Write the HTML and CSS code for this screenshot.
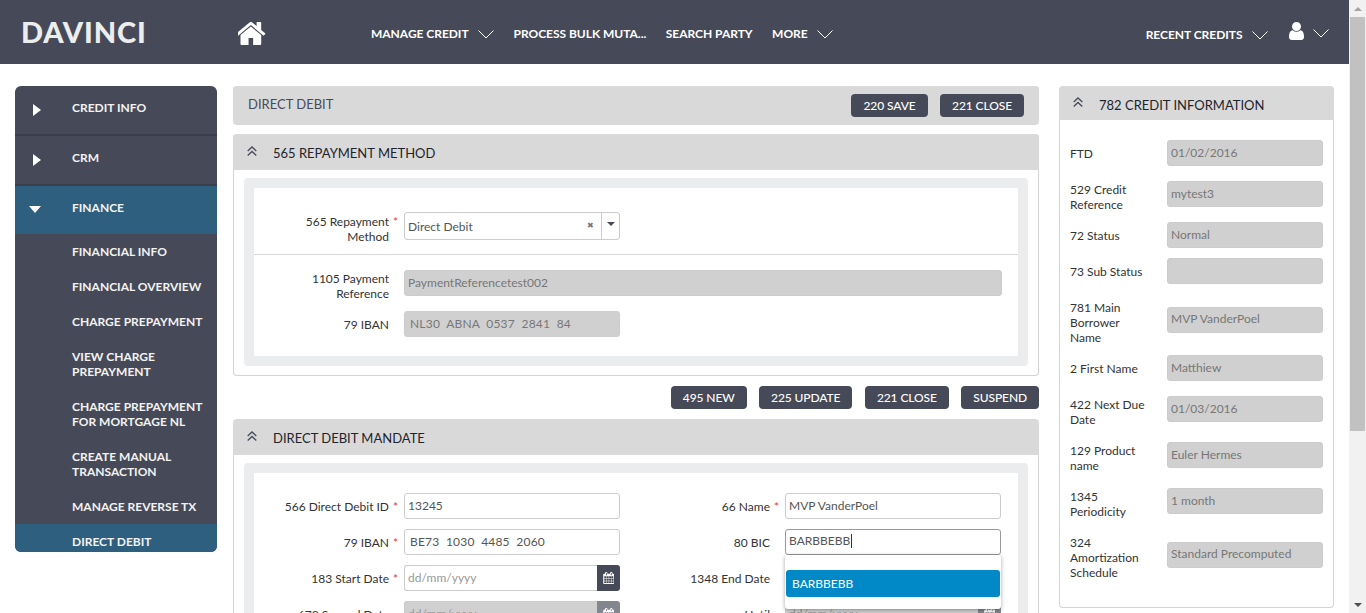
FILE: index.html
```html
<!DOCTYPE html>
<html lang="en">
<head>
<meta charset="utf-8">
<title>Davinci - Direct Debit</title>
<link rel="stylesheet" href="styles.css">
</head>
<body>
<svg class="defs" aria-hidden="true">
  <symbol id="chev" viewBox="0 0 16 9"><polyline points="0.5,0.5 8,8 15.5,0.5" fill="none" stroke="#fff" stroke-width="1"/></symbol>
  <symbol id="dbl" viewBox="0 0 10 10"><path d="M0.7 5 5 1 9.3 5M0.7 9.500 5 5.500 9.300 9.500" fill="none" stroke="#474b59" stroke-width="1.3"/></symbol>
  <symbol id="cal" viewBox="0 0 1664 1792"><path fill="#fff" d="M192 1664h288v-288h-288v288zm352 0h320v-288h-320v288zm-352-352h288v-320h-288v320zm352 0h320v-320h-320v320zm-352-384h288v-288h-288v288zm736 736h320v-288h-320v288zm-384-736h320v-288h-320v288zm768 736h288v-288h-288v288zm-384-352h320v-320h-320v320zm-352-864v-288q0-13-9.500-22.500t-22.500-9.500h-64q-13 0-22.500 9.500t-9.500 22.500v288q0 13 9.500 22.500t22.500 9.500h64q13 0 22.500-9.500t9.500-22.500zm736 864h288v-320h-288v320zm-384-384h320v-288h-320v288zm352 0h288v-288h-288v288zm32-480v-288q0-13-9.500-22.500t-22.500-9.500h-64q-13 0-22.500 9.500t-9.500 22.500v288q0 13 9.500 22.500t22.500 9.500h64q13 0 22.500-9.500t9.500-22.500zm384-64v1280q0 52-38 90t-90 38h-1408q-52 0-90-38t-38-90v-1280q0-52 38-90t90-38h128v-96q0-66 47-113t113-47h64q66 0 113 47t47 113v96h384v-96q0-66 47-113t113-47h64q66 0 113 47t47 113v96h128q52 0 90 38t38 90z"/></symbol>
</svg>
<div class="page">
  <header class="topbar">
    <div class="logo">DAVINCI</div>
    <svg class="home" viewBox="128 256 1536 1280" aria-label="Home"><path fill="#fff" d="M1408 992v480q0 26-19 45t-45 19h-384v-384h-256v384h-384q-26 0-45-19t-19-45v-480q0-1 .5-3t.5-3l575-474 575 474q1 2 1 6zm223-69l-62 74q-8 9-21 11h-3q-13 0-21-7l-692-577-692 577q-12 8-24 7-13-2-21-11l-62-74q-8-10-7-23.500t11-21.500l719-599q32-26 76-26t76 26l244 204v-195q0-14 9-23t23-9h192q14 0 23 9t9 23v408l219 182q10 8 11 21.500t-7 23.500z"/></svg>
    <nav class="mainnav">
      <span class="navitem">MANAGE CREDIT <svg class="chev"><use href="#chev"/></svg></span>
      <span class="navitem">PROCESS BULK MUTA...</span>
      <span class="navitem">SEARCH PARTY</span>
      <span class="navitem">MORE <svg class="chev"><use href="#chev"/></svg></span>
    </nav>
    <div class="usernav">
      <span class="navitem recent">RECENT CREDITS <svg class="chev"><use href="#chev"/></svg></span>
      <svg class="user" viewBox="256 128 1280 1536" aria-label="User"><path fill="#fff" d="M1536 1399q0 109-62.500 187t-150.500 78h-854q-88 0-150.500-78t-62.500-187q0-85 8.500-160.500t31.500-152 58.500-131 94-89 134.500-34.500q131 128 313 128t313-128q76 0 134.500 34.500t94 89 58.500 131 31.500 152 8.500 160.500zm-256-887q0 159-112.500 271.500t-271.500 112.500-271.500-112.500-112.500-271.500 112.500-271.500 271.500-112.500 271.500 112.500 112.500 271.500z"/></svg>
      <svg class="chev"><use href="#chev"/></svg>
    </div>
  </header>

  <div class="content">
    <aside class="sidebar">
      <div class="sideitem"><span class="tri-right"></span>CREDIT INFO</div>
      <div class="sideitem"><span class="tri-right"></span>CRM</div>
      <div class="sideitem open"><span class="tri-down"></span>FINANCE</div>
      <ul class="submenu">
        <li>FINANCIAL INFO</li>
        <li>FINANCIAL OVERVIEW</li>
        <li>CHARGE PREPAYMENT</li>
        <li>VIEW CHARGE PREPAYMENT</li>
        <li>CHARGE PREPAYMENT FOR MORTGAGE NL</li>
        <li>CREATE MANUAL TRANSACTION</li>
        <li>MANAGE REVERSE TX</li>
        <li class="active">DIRECT DEBIT</li>
      </ul>
    </aside>

    <main class="center">
      <div class="toolbar">
        <h1 class="pagetitle">DIRECT DEBIT</h1>
        <div class="btns">
          <button class="btn">220 SAVE</button>
          <button class="btn">221 CLOSE</button>
        </div>
      </div>

      <section class="panel">
        <div class="panelhead"><svg class="dbl"><use href="#dbl"/></svg><h2>565 REPAYMENT METHOD</h2></div>
        <div class="panelbody">
          <div class="well">
            <div class="form first">
              <label class="lbl">565 Repayment Method<span class="req">*</span></label>
              <div class="select">
                <span class="selval">Direct Debit</span>
                <span class="selx">&#10006;</span>
                <span class="selarrow"><span class="tri-small"></span></span>
              </div>
            </div>
            <hr class="divider">
            <div class="form">
              <label class="lbl">1105 Payment Reference</label>
              <input class="field span3" disabled value="PaymentReferencetest002">
              <label class="lbl single">79 IBAN</label>
              <input class="field iban" disabled value="NL30  ABNA  0537  2841  84">
            </div>
          </div>
        </div>
      </section>

      <div class="actions">
        <button class="btn">495 NEW</button>
        <button class="btn">225 UPDATE</button>
        <button class="btn">221 CLOSE</button>
        <button class="btn">SUSPEND</button>
      </div>

      <section class="panel">
        <div class="panelhead"><svg class="dbl"><use href="#dbl"/></svg><h2>DIRECT DEBIT MANDATE</h2></div>
        <div class="panelbody">
          <div class="well">
            <div class="form mandate">
              <label class="lbl single">566 Direct Debit ID<span class="req">*</span></label>
              <input class="field" value="13245">
              <label class="lbl single">66 Name<span class="req">*</span></label>
              <input class="field" value="MVP VanderPoel">

              <label class="lbl single">79 IBAN<span class="req">*</span></label>
              <input class="field iban" value="BE73  1030  4485  2060">
              <label class="lbl single">80 BIC</label>
              <div class="bic">
                <div class="field focus">BARBBEBB<span class="caret"></span></div>
                <div class="suggest"><div class="suggestitem">BARBBEBB</div></div>
              </div>

              <label class="lbl single">183 Start Date<span class="req">*</span></label>
              <div class="date"><input class="field" placeholder="dd/mm/yyyy"><span class="addon"><svg class="cal"><use href="#cal"/></svg></span></div>
              <label class="lbl single">1348 End Date</label>
              <div class="date"><input class="field" placeholder="dd/mm/yyyy"><span class="addon"><svg class="cal"><use href="#cal"/></svg></span></div>

              <label class="lbl single">678 Second Date</label>
              <div class="date off"><input class="field" disabled placeholder="dd/mm/yyyy"><span class="addon"><svg class="cal"><use href="#cal"/></svg></span></div>
              <label class="lbl single">Until</label>
              <div class="date off"><input class="field" disabled placeholder="dd/mm/yyyy"><span class="addon"><svg class="cal"><use href="#cal"/></svg></span></div>
            </div>
          </div>
        </div>
      </section>
    </main>

    <aside class="info">
      <div class="panelhead infohead"><svg class="dbl"><use href="#dbl"/></svg><h2>782 CREDIT INFORMATION</h2></div>
      <div class="infobody">
        <div class="inforow"><label>FTD</label><input class="field" disabled value="01/02/2016"></div>
        <div class="inforow"><label>529 Credit Reference</label><input class="field" disabled value="mytest3"></div>
        <div class="inforow"><label>72 Status</label><input class="field" disabled value="Normal"></div>
        <div class="inforow"><label>73 Sub Status</label><input class="field" disabled></div>
        <div class="inforow"><label>781 Main Borrower Name</label><input class="field" disabled value="MVP VanderPoel"></div>
        <div class="inforow"><label>2 First Name</label><input class="field" disabled value="Matthiew"></div>
        <div class="inforow"><label>422 Next Due Date</label><input class="field" disabled value="01/03/2016"></div>
        <div class="inforow"><label>129 Product name</label><input class="field" disabled value="Euler Hermes"></div>
        <div class="inforow"><label>1345 Periodicity</label><input class="field" disabled value="1 month"></div>
        <div class="inforow"><label>324 Amortization Schedule</label><input class="field" disabled value="Standard Precomputed"></div>
      </div>
    </aside>
  </div>
</div>
<div class="scrollbar">
  <span class="sb-up"></span>
  <span class="sb-thumb"></span>
  <span class="sb-down"></span>
</div>
</body>
</html>
```
FILE: styles.css
```css
* { box-sizing: border-box; }
html, body { margin: 0; height: 100%; overflow: hidden; }
body {
  display: flex;
  font-family: Lato, "Open Sans", sans-serif;
  font-size: 12px;
  line-height: 15px;
  color: #333;
  background: #fff;
}
.defs { display: none; }
.page { flex: 1; min-width: 0; height: 613px; overflow: hidden; }

/* top bar */
.topbar {
  height: 64px;
  background: #464a58;
  display: flex;
  align-items: center;
  padding-left: 21px;
  padding-right: 20px;
  color: #fff;
}
.logo {
  width: 217px;
  font-size: 29px;
  font-weight: 900;
  line-height: 30px;
  letter-spacing: 0.9px;
  color: #eceded;
  margin-top: 0;
}
.home { width: 28px; height: 23px; margin-top: 2px; flex: none; }
.mainnav {
  display: flex;
  align-items: center;
  gap: 19.5px;
  margin-left: 105px;
  margin-top: 3px;
}
.navitem { font-weight: 700; font-size: 12px; white-space: nowrap; display: flex; align-items: center; letter-spacing: -0.03px; }
.chev { width: 16px; height: 9px; margin-left: 9.5px; flex: none; margin-top: 2px; }
.usernav { margin-left: auto; display: flex; align-items: center; margin-top: 4px; }
.recent { margin-right: 21px; }
.user { width: 15px; height: 18px; margin-top: -6px; flex: none; }
.usernav > .chev { margin-left: 9px; margin-top: -2px; }

/* columns */
.content {
  display: grid;
  grid-template-columns: 202px 810px 275px;
  column-gap: 16px;
  padding: 22px 0 0 15px;
  align-items: start;
}
.center { padding-right: 4px; }

/* sidebar */
.sidebar {
  height: 466px;
  overflow: hidden;
  background: #464a58;
  border-radius: 6px;
  color: #f2f2f2;
  font-weight: 700;
}
.sideitem {
  height: 50px;
  display: flex;
  align-items: center;
  padding-left: 57px;
  padding-bottom: 5px;
  border-bottom: 2px solid #3a3e4b;
  position: relative;
}
.sideitem.open { background: #2e5f7f; border-bottom: 0; height: 48px; padding-bottom: 6px; }
.tri-right {
  position: absolute; left: 18px; top: 18px;
  border-left: 8px solid #fff;
  border-top: 6px solid transparent;
  border-bottom: 6px solid transparent;
}
.tri-down {
  position: absolute; left: 14px; top: 20px;
  border-top: 7px solid #fff;
  border-left: 6.5px solid transparent;
  border-right: 6.5px solid transparent;
}
.submenu { list-style: none; margin: 0; padding: 0; }
.submenu li { padding: 10px 10px 10px 57px; }
.submenu .active { background: #2e5f7f; }

/* center */
.toolbar {
  height: 39px;
  background: #d9d9d9;
  border-radius: 4px;
  display: flex;
  align-items: center;
  justify-content: space-between;
  padding: 0 15px;
  margin-bottom: 9px;
}
.pagetitle { margin: 0 0 2px; font-size: 13px; font-weight: 400; color: #474b59; }
.btns { display: flex; gap: 12.5px; }
.btn {
  height: 23px;
  padding: 0 12px;
  border: 0;
  border-radius: 4px;
  background: #464a58;
  color: #fff;
  font: 500 12px/15px Lato, sans-serif;
  letter-spacing: -0.1px;
  white-space: nowrap;
}
.panelhead {
  height: 36px;
  background: #d9d9d9;
  border-radius: 4px 4px 0 0;
  display: flex;
  align-items: center;
  padding-left: 14px;
  padding-top: 2px;
}
.panelhead h2 { margin: 0; font-size: 13px; line-height: 18px; font-weight: 400; color: #22242c; }
.dbl { width: 10px; height: 10px; margin-right: 16px; flex: none; margin-top: -5px; }
.panelbody {
  border: 1px solid #d4d4d4;
  border-top: 0;
  border-radius: 0 0 4px 4px;
  padding: 8px 10px 9px 10px;
}
.well { background: #ebecee; border-radius: 4px; padding: 10px; display: flex; flex-direction: column; }
.form {
  background: #fff;
  display: grid;
  grid-template-columns: 135px 216px 135px 216px;
  column-gap: 15px;
  row-gap: 10px;
  padding: 20px 0 19px;
  align-items: center;
}
.form.first { padding: 20px 0 10px; }
.divider { margin: 0; border: 0; height: 1px; background: #d9d9d9; flex: none; }
.form.first + .divider + .form { padding-top: 10px; }
.lbl {
  position: relative;
  text-align: right;
  padding: 6px 0 0 15px;
  color: #333;
  display: block;
  align-self: start;
  grid-column: 1;
}
.form .lbl:nth-of-type(even) { grid-column: auto; }
.mandate { padding-bottom: 40px; }
.req {
  position: absolute;
  top: 6px;
  right: -9px;
  color: #f33;
}
.lbl.single { height: 26px; padding-left: 0; }
.field {
  display: block;
  width: 100%;
  height: 26px;
  border: 1px solid #ccc;
  border-radius: 3px;
  padding: 0 3px 2px;
  background: #fff;
  color: #555;
  font: 400 12px/21px Lato, sans-serif;
  outline: none;
}
.field:disabled { background: #d0d0d0; color: #777; }
.field::placeholder { color: #999; opacity: 1; }
.span3 { grid-column: 2 / span 3; width: calc(100% + 1px); }
.iban { padding-left: 5px; letter-spacing: 0.2px; grid-column: 2; }
.mandate .iban { grid-column: auto; }
.select {
  height: 28px;
  border: 1px solid #ccc;
  border-radius: 3px;
  display: flex;
  align-items: center;
  color: #555;
}
.selval { flex: 1; padding: 1px 0 0 3px; }
.selx { font-size: 8px; color: #777; margin: -2px 7px 0 0; }
.selarrow {
  width: 18px; height: 100%;
  border-left: 1px solid #ccc;
  display: flex; justify-content: center; padding-top: 9px;
}
.tri-small {
  width: 0; height: 0;
  border-top: 4px solid #474b59;
  border-left: 4px solid transparent;
  border-right: 4px solid transparent;
}
.actions { display: flex; justify-content: flex-end; gap: 12.5px; margin: 10px 0; }
.bic { position: relative; }
.focus { border-color: #999; color: #555; }
.caret { display: inline-block; width: 1px; height: 14px; background: #333; vertical-align: -3px; margin-left: 1px; }
.suggest {
  position: absolute;
  top: 26px; left: 0; right: 0;
  height: 54px;
  padding: 15px 1px 0;
  background: #fff;
  border-radius: 3px;
  box-shadow: 0 1px 4px rgba(0,0,0,.35);
  z-index: 2;
}
.suggestitem {
  height: 27px;
  background: #0088c7;
  border-radius: 3px;
  color: #fff;
  padding: 6px 6px;
}
.date { display: flex; position: relative; }
.date .field { border-radius: 3px 0 0 3px; border-right: 0; flex: 1; min-width: 0; }
.addon {
  width: 23px; height: 26px; flex: none;
  background: #464a58;
  border-radius: 0 3px 3px 0;
  display: flex; align-items: center; justify-content: center;
}
.cal { width: 11px; height: 12px; }
.off .addon { background: #84868f; }

/* credit info */
.infohead { height: 34px; padding-top: 3px; }
.infobody {
  border: 1px solid #d4d4d4;
  border-top: 0;
  border-radius: 0 0 4px 4px;
  padding: 20px 10px 27px 10px;
  display: flex;
  flex-direction: column;
  gap: 10px;
}
.inforow { display: flex; align-items: center; justify-content: space-between; }
.inforow label { width: 82px; padding-top: 6px; align-self: flex-start; color: #333; }
.inforow .field { width: 156px; flex: none; }

/* scrollbar */
.scrollbar {
  width: 17px;
  height: 613px;
  flex: none;
  background: #f1f1f1;
  display: flex;
  flex-direction: column;
  align-items: center;
}
.sb-up {
  margin-top: 7px;
  border-bottom: 4px solid #a3a3a3;
  border-left: 4px solid transparent;
  border-right: 4px solid transparent;
}
.sb-thumb { width: 15px; height: 414px; margin-top: 6px; background: #c1c1c1; }
.sb-down {
  margin-top: auto;
  margin-bottom: 6px;
  border-top: 4px solid #505050;
  border-left: 4px solid transparent;
  border-right: 4px solid transparent;
}
```
